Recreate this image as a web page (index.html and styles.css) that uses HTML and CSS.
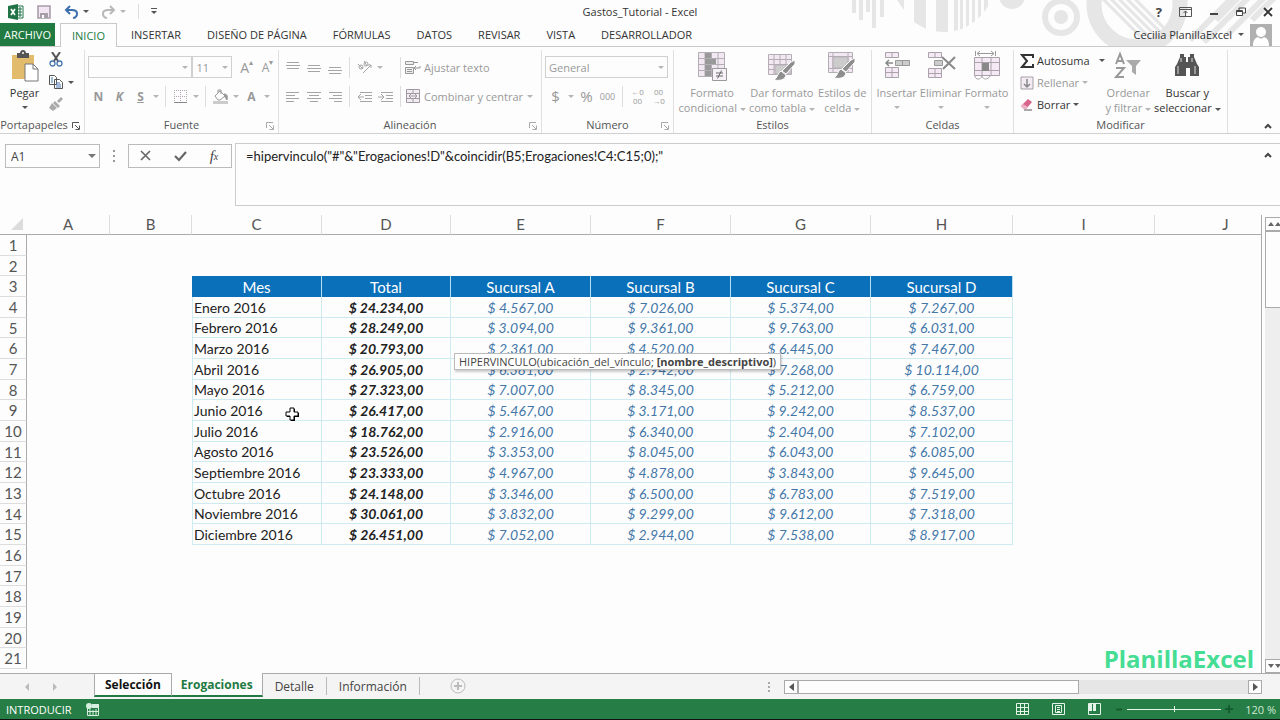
FILE: index.html
```
<!DOCTYPE html>
<html lang="es">
<head>
  <meta charset="utf-8">
  <title>Gastos_Tutorial - Excel</title>
  <link rel="stylesheet" href="styles.css">
</head>
<body>
  <header id="top">
    <svg class="art" width="440" height="46" viewBox="840 0 440 46" fill="#e6e6e6">
      <clipPath id="ball"><circle cx="944" cy="-18" r="50"/></clipPath>
      <clipPath id="ringHole"><circle cx="1137" cy="4" r="36"/></clipPath>
      <path d="M852 0h4v13h-4zM859 0h4v20h-4zM866 0h4v12h-4zM872 0h4v28h-4zM880 0h4v17h-4zM897 0h7v10z"/>
      <path clip-path="url(#ball)" d="M914 0h12v40h-12zM936 0h12v40h-12zM954 0h4v40h-4zM960 0h3v40h-3zM966 0h3v40h-3zM972 0h3v40h-3zM978 0h3v40h-3zM984 0h4v40h-4z"/>
      <circle cx="1012" cy="-4" r="13"/>
      <circle cx="1061" cy="17" r="16" fill="none" stroke="#e6e6e6" stroke-width="6"/>
      <circle cx="1061" cy="17" r="7"/>
      <circle cx="1137" cy="4" r="43" fill="none" stroke="#e6e6e6" stroke-width="15"/>
      <path clip-path="url(#ringHole)" stroke="#e6e6e6" stroke-width="3" d="M1098-6l50 50M1106-6l50 50M1114-6l50 50M1122-6l50 50M1130-6l50 50"/>
      <path stroke="#e6e6e6" stroke-width="6" d="M1190 40l42-42M1204 42l46-46M1216 20l24-24M1228 34l36-36M1252 20l24-24"/>
    </svg>

    <div id="titlebar">
      <div class="quick">
        <svg width="16" height="16" viewBox="0 0 16 16"><path d="M9 2h6v12H9z" fill="#fff" stroke="#217346"/><path d="M10 5h4M10 8h4M10 11h4M12 3v10" stroke="#217346"/><path d="M0 2l10-2v16L0 14z" fill="#217346"/><path d="M3 5l4 6M7 5l-4 6" stroke="#fff" stroke-width="1.6"/></svg>
        <button aria-label="Guardar"><svg width="14" height="14" viewBox="0 0 14 14"><path d="M1 1h12v12H1z" fill="#f3e6f3" stroke="#a79fa8" stroke-width="1.6"/><path d="M3 8h8v5H3z" fill="#a79fa8"/><path d="M5 10h2v3H5z" fill="#fff"/></svg></button>
        <button aria-label="Deshacer"><svg width="15" height="14" viewBox="0 0 15 14" fill="none" stroke="#3b6fae" stroke-width="2"><path d="M6 1L2 5l4 4M2 5h6c7 0 6 7 1 8"/></svg></button>
        <i class="caret dark"></i>
        <button aria-label="Rehacer"><svg width="15" height="14" viewBox="0 0 15 14" fill="none" stroke="#b8b8b8" stroke-width="2"><path d="M9 1l4 4-4 4M13 5H7C0 5 1 12 6 13"/></svg></button>
        <i class="caret"></i>
        <span class="line"></span>
        <button aria-label="Personalizar"><svg width="6" height="7" viewBox="0 0 6 7" fill="#555"><path d="M0 0h6v1H0zM0 3h6L3 6z"/></svg></button>
      </div>
      <div class="doc">Gastos_Tutorial - Excel</div>
      <div class="window">
        <button aria-label="Ayuda"><b>?</b></button>
        <button aria-label="Cinta"><svg width="13" height="10" viewBox="0 0 13 10" fill="none" stroke="#555"><path d="M.5.5h12v9H.5zM.5 2.5h12M6.500 9V4M4.500 6l2-2 2 2"/></svg></button>
        <button aria-label="Minimizar"><svg width="10" height="10" viewBox="0 0 10 10"><path d="M1 6h8v2H1z" fill="#444"/></svg></button>
        <button aria-label="Restaurar"><svg width="10" height="10" viewBox="0 0 10 10" fill="none" stroke="#444"><path d="M.5 3.500h6v5h-6zM3 3V1h6.500v5H7M.5 4.500h6"/></svg></button>
        <button aria-label="Cerrar"><svg width="10" height="10" viewBox="0 0 10 10" stroke="#333" stroke-width="1.800"><path d="M1 1l8 8M9 1L1 9"/></svg></button>
      </div>
    </div>

    <nav id="tabs">
      <button class="file">ARCHIVO</button>
      <button class="active">INICIO</button>
      <button>INSERTAR</button>
      <button>DISEÑO DE PÁGINA</button>
      <button>FÓRMULAS</button>
      <button>DATOS</button>
      <button>REVISAR</button>
      <button>VISTA</button>
      <button>DESARROLLADOR</button>
      <div class="user">
        Cecilia PlanillaExcel <i class="caret dark"></i>
        <svg width="22" height="22" viewBox="0 0 22 22"><path d="M0 0h22v22H0z" fill="#b0b0b0"/><circle cx="11" cy="8" r="5" fill="#fff"/><path d="M3 22c0-6 2-8 5-9 2 2 4 2 6 0 3 1 5 3 5 9z" fill="#fff"/></svg>
      </div>
    </nav>
  </header>

  <div id="ribbon">
    <section class="group clipboard">
      <div class="tools">
        <button class="big on">
          <svg width="28" height="32" viewBox="0 0 28 32"><path d="M1 5h22v24H1z" fill="#e3bb6d"/><path d="M6 3h3c0-4 6-4 6 0h3v5H6z" fill="#555"/><circle cx="12" cy="3" r="1" fill="#fff"/><path d="M14 14h8l5 5v12H14z" fill="#fff" stroke="#777"/><path d="M22 14v5h5" fill="none" stroke="#777"/></svg>
          Pegar<i class="caret dark"></i>
        </button>
        <div class="stack">
          <button aria-label="Cortar"><svg width="14" height="15" viewBox="0 0 14 15" fill="none"><path d="M3 0l6 9M11 0L5 9" stroke="#555" stroke-width="2"/><circle cx="3.500" cy="11.500" r="2.500" stroke="#4676b0" stroke-width="1.300"/><circle cx="10.500" cy="11.500" r="2.500" stroke="#4676b0" stroke-width="1.300"/></svg></button>
          <button aria-label="Copiar"><svg width="14" height="14" viewBox="0 0 14 14" fill="#fff" stroke="#555"><path d="M.5.5h5l2 2v7h-7zM5.500 4.500h5l3 3v6h-8z"/><path d="M2 3h2M2 5h2M2 7h2M7 8h4M7 10h5M7 12h5" stroke="#4676b0"/></svg><i class="caret dark"></i></button>
          <button aria-label="Copiar formato"><svg width="14" height="14" viewBox="0 0 14 14" fill="#aaa"><path d="M12 0l2 2-4 4-2-2zM6 4l5 5-2 2-5-5zM3 6l5 5-4 3-4-3z"/></svg></button>
        </div>
      </div>
      <h2>Portapapeles<svg class="launch on" width="8" height="8" viewBox="0 0 8 8"><path d="M.5 6V.5H7M3 3l4 4M7.500 3.500v4h-4"/></svg></h2>
    </section>

    <section class="group font">
      <div class="rows">
        <div class="row">
          <span class="pick family"><select aria-label="Fuente"><option></option></select></span>
          <span class="pick size"><select aria-label="Tamaño"><option>11</option></select></span>
          <button class="ib grow" aria-label="Aumentar">A<sup>▴</sup></button>
          <button class="ib shrink" aria-label="Disminuir">A<sup>▾</sup></button>
        </div>
        <div class="row">
          <button class="ib"><b>N</b></button>
          <button class="ib"><b><em>K</em></b></button>
          <button class="ib"><b><u>S</u></b></button>
          <button class="drop" aria-label="Subrayado"><i class="caret"></i></button>
          <span class="line"></span>
          <button class="ib" aria-label="Bordes"><svg width="13" height="13" viewBox="0 0 13 13" stroke="#b3a7b3"><path d="M0 .5h13M.5 0v12M12.500 0v12M6.500 0v12M0 6.500h13" stroke-dasharray="1 1"/><path d="M0 12.500h13" stroke="#888"/></svg></button>
          <button class="drop" aria-label="Más bordes"><i class="caret"></i></button>
          <span class="line"></span>
          <button class="ib" aria-label="Relleno"><svg width="16" height="15" viewBox="0 0 16 15" fill="none" stroke="#999"><path d="M2 7l5-5 5 5-5 4H5zM5 4V1h3v4"/><path d="M11 5c3 0 4 2 3 6l-2-3z" fill="#999"/><path d="M0 13.500h15" stroke="#ccc" stroke-width="3"/></svg></button>
          <button class="drop" aria-label="Más rellenos"><i class="caret"></i></button>
          <button class="ib"><b>A</b></button>
          <button class="drop" aria-label="Más colores"><i class="caret"></i></button>
        </div>
      </div>
      <h2>Fuente<svg class="launch" width="8" height="8" viewBox="0 0 8 8"><path d="M.5 6V.5H7M3 3l4 4M7.500 3.500v4h-4"/></svg></h2>
    </section>

    <section class="group align">
      <div class="rows">
        <div class="row">
          <button class="ib" aria-label="Arriba"><svg width="14" height="13" viewBox="0 0 14 13"><path d="M1 1.500h12M0 4.500h14M1 7.500h12"/></svg></button>
          <button class="ib" aria-label="Medio"><svg width="14" height="13" viewBox="0 0 14 13"><path d="M1 4.500h12M0 7.500h14M1 10.500h12"/></svg></button>
          <button class="ib" aria-label="Abajo"><svg width="14" height="13" viewBox="0 0 14 13"><path d="M1 6.500h12M0 9.500h14M1 12.500h12"/></svg></button>
          <span class="line"></span>
          <button class="ib" aria-label="Orientación"><svg width="15" height="14" viewBox="0 0 15 14" fill="none" stroke="#999"><circle cx="4" cy="7" r="2"/><path d="M1 4l5 5M7 1l3 5"/><circle cx="9" cy="4" r="2"/><path d="M6 13l8-8M11 5h3v3"/></svg></button>
          <button class="drop" aria-label="Más orientaciones"><i class="caret"></i></button>
          <span class="blank"></span>
          <span class="line"></span>
          <button class="wide"><svg width="16" height="15" viewBox="0 0 16 15" fill="#eee" stroke="#999"><path d="M.5 1.500h8v3h-8zM8 2.500h5M.5 7.500h8v6h-8zM2 9.500h5M2 11.500h5M15 6v2h-5M11 6L9 8l2 2"/></svg>Ajustar texto</button>
        </div>
        <div class="row">
          <button class="ib" aria-label="Izquierda"><svg width="14" height="11" viewBox="0 0 14 11"><path d="M0 1.500h13M0 4.500h9M0 7.500h13M0 10.500h8"/></svg></button>
          <button class="ib" aria-label="Centro"><svg width="14" height="11" viewBox="0 0 14 11"><path d="M0 1.500h14M2 4.500h10M0 7.500h14M3 10.500h8"/></svg></button>
          <button class="ib" aria-label="Derecha"><svg width="14" height="11" viewBox="0 0 14 11"><path d="M1 1.500h13M5 4.500h9M1 7.500h13M6 10.500h8"/></svg></button>
          <span class="line"></span>
          <button class="ib" aria-label="Disminuir sangría"><svg width="15" height="11" viewBox="0 0 15 11" fill="none"><path d="M3 1.500h12M8 4.500h7M8 7.500h7M3 10.500h12M7 6H1M4 3L1 6l3 3"/></svg></button>
          <button class="ib" aria-label="Aumentar sangría"><svg width="15" height="11" viewBox="0 0 15 11" fill="none"><path d="M3 1.500h12M8 4.500h7M8 7.500h7M3 10.500h12M0 6h6M3 3l3 3-3 3"/></svg></button>
          <span class="line"></span>
          <button class="wide"><svg width="16" height="15" viewBox="0 0 16 15" fill="#f3ecf3" stroke="#a09aa0"><path d="M1.500.5h13v13h-13zM1.500 4.500h13M1.500 9.500h13M8 0v4M8 10v4M4 7h8M6 5L4 7l2 2M10 5l2 2-2 2"/></svg>Combinar y centrar</button>
          <button class="drop end" aria-label="Más"><i class="caret"></i></button>
        </div>
      </div>
      <h2>Alineación<svg class="launch" width="8" height="8" viewBox="0 0 8 8"><path d="M.5 6V.5H7M3 3l4 4M7.500 3.500v4h-4"/></svg></h2>
    </section>

    <section class="group number">
      <div class="rows">
        <div class="row">
          <span class="pick format"><select aria-label="Formato de número"><option>General</option></select></span>
        </div>
        <div class="row">
          <button class="ib sign">$</button>
          <button class="drop" aria-label="Monedas"><i class="caret"></i></button>
          <button class="ib sign">%</button>
          <button class="ib zeros">000</button>
          <span class="line"></span>
          <button class="ib dec">←0<br>00</button>
          <button class="ib dec">00<br>→0</button>
        </div>
      </div>
      <h2>Número<svg class="launch" width="8" height="8" viewBox="0 0 8 8"><path d="M.5 6V.5H7M3 3l4 4M7.500 3.500v4h-4"/></svg></h2>
    </section>

    <section class="group styles">
      <div class="tools">
        <button class="big">
          <svg width="30" height="32" viewBox="0 0 30 32" fill="#f1e8f1" stroke="#b5adb5"><path d="M1.500 2.500h26v24h-26zM1 8.500h26M1 14.500h26M1 20.500h26M8 3v23M14.500 3v23M21 3v23"/><path d="M8 3h6v5H8zM8 9h11v5H8zM8 15h6v5H8zM8 21h6v5H8z" fill="#999" stroke="none"/><path d="M15.500 18.500h14v12h-14z" fill="#f7f2f7" stroke="#999"/><path d="M19 23h7M19 26h7M24.500 20.500l-4 8" stroke="#666"/></svg>
          <span>Formato<br>condicional <i class="caret"></i></span>
        </button>
        <button class="big">
          <svg width="30" height="32" viewBox="0 0 30 32" fill="#f1e8f1" stroke="#b5adb5"><path d="M1.500 4.500h23v20h-23zM1 9.500h23M1 14.500h23M1 19.500h23M7 4v20M13 4v20M19 4v20"/><path d="M8 15h16v9H8z" fill="#ccc"/><path d="M28 10v4l-9 10-4-3 9-9z" fill="#8e8e8e" stroke="#fff"/><path d="M14 21l5 4c-1 5-6 6-12 5 4-2 3-7 7-9z" fill="#8e8e8e" stroke="#fff"/></svg>
          <span>Dar formato<br>como tabla <i class="caret"></i></span>
        </button>
        <button class="big">
          <svg width="30" height="32" viewBox="0 0 30 32" fill="#f1e8f1" stroke="#b5adb5"><path d="M1.500 2.500h24v20h-24zM1 6.500h24M1 18.500h24M6 3v19M21 3v19"/><path d="M6 7h15v11H6z" fill="#ccc"/><path d="M28 8v4l-9 10-4-3 9-9z" fill="#8e8e8e" stroke="#fff"/><path d="M14 19l5 4c-1 5-6 6-12 5 4-2 3-7 7-9z" fill="#8e8e8e" stroke="#fff"/></svg>
          <span>Estilos de<br>celda <i class="caret"></i></span>
        </button>
      </div>
      <h2>Estilos</h2>
    </section>

    <section class="group cells">
      <div class="tools">
        <button class="big">
          <svg width="28" height="32" viewBox="0 0 28 32" fill="#f5e9f5" stroke="#aaa2aa"><path d="M2.500 2.500h13v5h-13zM9 3v5M2.500 17.500h13v10h-13zM9 18v10M3 22.500h12"/><path d="M12.500 10.500h14v5h-14zM19.500 11v5" fill="#ccc" stroke="#999"/><path d="M10 13H4M6 10l-3 3 3 3" fill="none" stroke="#888" stroke-width="1.500"/></svg>
          Insertar<i class="caret"></i>
        </button>
        <button class="big">
          <svg width="30" height="32" viewBox="0 0 30 32" fill="#f5e9f5" stroke="#aaa2aa"><path d="M2.500 2.500h13v5h-13zM9 3v5M2.500 18.500h13v9h-13zM9 19v9M3 23.500h12"/><path d="M8.500 10.500h8v5h-8z" fill="#ccc" stroke="#999"/><path d="M16 7l13 12M29 7L17 19" stroke="#888" stroke-width="2"/></svg>
          Eliminar<i class="caret"></i>
        </button>
        <button class="big">
          <svg width="28" height="32" viewBox="0 0 28 32" fill="#f5e9f5" stroke="#aaa2aa"><path d="M1.500 7.500h25v18h-25zM1 12.500h25M1 20.500h25M9 8v17M18 8v17"/><path d="M9 13h7v8H9z" fill="#888" stroke="none"/><path d="M2.500 1v5M22.500 1v5M4 3.500h17M7 1L4 3.500 7 6M18 1l3 2.500L18 6" fill="none" stroke="#999"/><path d="M2 26c0 4 6 4 7 0 1 4 6 4 8 0" fill="#fff"/></svg>
          Formato<i class="caret"></i>
        </button>
      </div>
      <h2>Celdas</h2>
    </section>

    <section class="group edit">
      <div class="tools">
        <div class="list">
          <button class="on"><svg width="14" height="14" viewBox="0 0 14 14" fill="none" stroke="#333" stroke-width="2"><path d="M13 4V1H2l5 6-5 6h11v-3"/></svg>Autosuma <i class="caret dark far"></i></button>
          <button><svg width="14" height="14" viewBox="0 0 14 14" fill="#f3ecf3" stroke="#a79fa8"><path d="M1 1h12v12H1z"/><path d="M7 3v7M4 8l3 3 3-3" fill="none" stroke="#888" stroke-width="1.500"/></svg>Rellenar <i class="caret"></i></button>
          <button class="on"><svg width="14" height="14" viewBox="0 0 14 14"><path d="M8 1l4 3-6 7H4L1 8z" fill="#d9658b"/><path d="M3 6l5 3-2 2H4L1 8z" fill="#eeb0c4"/><path d="M4 12h8" stroke="#555"/></svg>Borrar <i class="caret dark"></i></button>
        </div>
        <button class="big">
          <svg width="28" height="32" viewBox="0 0 28 32" fill="none" stroke="#999" stroke-width="2"><path d="M2 14L6 4l4 10M3 11h6M2 18h8L2 27h8"/><path d="M12 10h15l-5 6v9l-4-3v-6z" fill="#aaa" stroke="none"/></svg>
          <span>Ordenar<br>y filtrar <i class="caret"></i></span>
        </button>
        <button class="big on">
          <svg width="26" height="32" viewBox="0 0 26 32" fill="#555"><path d="M6 4h4v3h2v5h2V7h2V4h4v3l3 7 2 3v9h-9v-8h-4v8H1v-9l2-3 3-7z"/><path d="M4 16v8M21 16v8M7 8v4M18 8v4" stroke="#ddd"/></svg>
          <span>Buscar y<br>seleccionar <i class="caret dark"></i></span>
        </button>
      </div>
      <h2>Modificar</h2>
    </section>
    <button class="collapse" aria-label="Contraer la cinta"><svg width="8" height="6" viewBox="0 0 8 6" fill="none" stroke="#444" stroke-width="2"><path d="M1 5l3-3 3 3"/></svg></button>
  </div>

  <div id="formulabar">
    <span class="pick name"><input value="A1" aria-label="Cuadro de nombres"></span>
    <svg class="grip" width="4" height="14" viewBox="0 0 4 14" fill="#999"><path d="M1 1h2v2H1zM1 6h2v2H1zM1 11h2v2H1z"/></svg>
    <div class="checks">
      <button aria-label="Cancelar"><svg width="12" height="12" viewBox="0 0 12 12" stroke="#666" stroke-width="1.600"><path d="M1 1l9 9M10 1l-9 9"/></svg></button>
      <button aria-label="Introducir"><svg width="13" height="12" viewBox="0 0 13 12" fill="none" stroke="#666" stroke-width="2.200"><path d="M1 6l4 4 7-8"/></svg></button>
      <button class="fx">f<sub>x</sub></button>
    </div>
    <textarea aria-label="Barra de fórmulas" spellcheck="false">=hipervinculo("#"&amp;"Erogaciones!D"&amp;coincidir(B5;Erogaciones!C4:C15;0);"</textarea>
    <button class="collapse" aria-label="Contraer la barra"><svg width="8" height="6" viewBox="0 0 8 6" fill="none" stroke="#444" stroke-width="2"><path d="M1 5l3-3 3 3"/></svg></button>
  </div>

  <main id="sheet">
    <div class="view">
      <table>
        <colgroup><col class="c-head"><col class="c-a"><col class="c-b"><col class="c-c"><col class="c-d"><col class="c-e"><col class="c-e"><col class="c-e"><col class="c-h"><col class="c-h"><col class="c-h"></colgroup>
        <thead>
          <tr><th><svg width="12" height="12" viewBox="0 0 12 12"><path d="M12 0v12H0z" fill="#dcdcdc"/></svg></th><th>A</th><th>B</th><th>C</th><th>D</th><th>E</th><th>F</th><th>G</th><th>H</th><th>I</th><th>J</th></tr>
        </thead>
        <tbody>
          <tr><th>1</th><td colspan="10"></td></tr>
          <tr><th>2</th><td colspan="10"></td></tr>
          <tr class="names"><th>3</th><td colspan="2"></td><td>Mes</td><td>Total</td><td>Sucursal A</td><td>Sucursal B</td><td>Sucursal C</td><td>Sucursal D</td></tr>
          <tr class="data"><th>4</th><td colspan="2"></td><td>Enero 2016</td><td>$ 24.234,00</td><td>$ 4.567,00</td><td>$ 7.026,00</td><td>$ 5.374,00</td><td>$ 7.267,00</td></tr>
          <tr class="data"><th>5</th><td colspan="2"></td><td>Febrero 2016</td><td>$ 28.249,00</td><td>$ 3.094,00</td><td>$ 9.361,00</td><td>$ 9.763,00</td><td>$ 6.031,00</td></tr>
          <tr class="data"><th>6</th><td colspan="2"></td><td>Marzo 2016</td><td>$ 20.793,00</td><td>$ 2.361,00</td><td>$ 4.520,00</td><td>$ 6.445,00</td><td>$ 7.467,00</td></tr>
          <tr class="data"><th>7</th><td colspan="2"></td><td>Abril 2016</td><td>$ 26.905,00</td><td>$ 6.381,00</td><td>$ 2.942,00</td><td>$ 7.268,00</td><td>$ 10.114,00</td></tr>
          <tr class="data"><th>8</th><td colspan="2"></td><td>Mayo 2016</td><td>$ 27.323,00</td><td>$ 7.007,00</td><td>$ 8.345,00</td><td>$ 5.212,00</td><td>$ 6.759,00</td></tr>
          <tr class="data"><th>9</th><td colspan="2"></td><td>Junio 2016</td><td>$ 26.417,00</td><td>$ 5.467,00</td><td>$ 3.171,00</td><td>$ 9.242,00</td><td>$ 8.537,00</td></tr>
          <tr class="data"><th>10</th><td colspan="2"></td><td>Julio 2016</td><td>$ 18.762,00</td><td>$ 2.916,00</td><td>$ 6.340,00</td><td>$ 2.404,00</td><td>$ 7.102,00</td></tr>
          <tr class="data"><th>11</th><td colspan="2"></td><td>Agosto 2016</td><td>$ 23.526,00</td><td>$ 3.353,00</td><td>$ 8.045,00</td><td>$ 6.043,00</td><td>$ 6.085,00</td></tr>
          <tr class="data"><th>12</th><td colspan="2"></td><td>Septiembre 2016</td><td>$ 23.333,00</td><td>$ 4.967,00</td><td>$ 4.878,00</td><td>$ 3.843,00</td><td>$ 9.645,00</td></tr>
          <tr class="data"><th>13</th><td colspan="2"></td><td>Octubre 2016</td><td>$ 24.148,00</td><td>$ 3.346,00</td><td>$ 6.500,00</td><td>$ 6.783,00</td><td>$ 7.519,00</td></tr>
          <tr class="data"><th>14</th><td colspan="2"></td><td>Noviembre 2016</td><td>$ 30.061,00</td><td>$ 3.832,00</td><td>$ 9.299,00</td><td>$ 9.612,00</td><td>$ 7.318,00</td></tr>
          <tr class="data"><th>15</th><td colspan="2"></td><td>Diciembre 2016</td><td>$ 26.451,00</td><td>$ 7.052,00</td><td>$ 2.944,00</td><td>$ 7.538,00</td><td>$ 8.917,00</td></tr>
          <tr><th>16</th><td colspan="10"></td></tr>
          <tr><th>17</th><td colspan="10"></td></tr>
          <tr><th>18</th><td colspan="10"></td></tr>
          <tr><th>19</th><td colspan="10"></td></tr>
          <tr><th>20</th><td colspan="10"></td></tr>
          <tr><th>21</th><td colspan="10"></td></tr>
        </tbody>
      </table>
      <div class="tip">HIPERVINCULO(ubicación_del_vínculo; <b>[nombre_descriptivo]</b>)</div>
      <svg class="cursor" width="15" height="15" viewBox="0 0 15 15"><path d="M5 1h4v4h4v4H9v4H5V9H1V5h4z" transform="translate(1 1)" fill="#000"/><path d="M5 1h4v4h4v4H9v4H5V9H1V5h4z" fill="#fff" stroke="#000"/></svg>
    </div>
    <div class="vbar">
      <button aria-label="Subir"><svg width="14" height="6" viewBox="0 0 14 6" fill="#666"><path d="M0 5l3-4 3 4zM7 5l3-4 3 4z"/></svg></button>
      <div class="thumb"></div>
      <button aria-label="Bajar"><svg width="14" height="6" viewBox="0 0 14 6" fill="#666"><path d="M0 1h6L3 5zM7 1h6l-3 4z"/></svg></button>
    </div>
    <div class="brand">PlanillaExcel</div>
  </main>

  <div id="sheets">
    <div class="arrows">
      <svg width="5" height="8" viewBox="0 0 5 8"><path d="M4 0v8L0 4z" fill="#bbb"/></svg>
      <svg width="5" height="8" viewBox="0 0 5 8"><path d="M1 0v8l4-4z" fill="#bbb"/></svg>
    </div>
    <button class="picked">Selección</button>
    <button class="picked current">Erogaciones</button>
    <button>Detalle</button>
    <button>Información</button>
    <button class="add" aria-label="Hoja nueva"><svg width="16" height="16" viewBox="0 0 16 16" fill="none" stroke="#bbb"><circle cx="8" cy="8" r="7"/><path d="M4 8h8M8 4v8" stroke-width="2"/></svg></button>
    <svg class="grip" width="4" height="14" viewBox="0 0 4 14" fill="#aaa"><path d="M1 2h2v2H1zM1 6h2v2H1zM1 10h2v2H1z"/></svg>
    <div class="hbar">
      <button aria-label="Izquierda"><svg width="5" height="8" viewBox="0 0 5 8"><path d="M5 0v8L0 4z" fill="#555"/></svg></button>
      <div class="thumb"></div>
      <button aria-label="Derecha"><svg width="5" height="8" viewBox="0 0 5 8"><path d="M0 0v8l5-4z" fill="#555"/></svg></button>
    </div>
  </div>

  <footer id="status">
    <span>INTRODUCIR</span>
    <svg width="13" height="13" viewBox="0 0 13 13" fill="none" stroke="#d6f0df"><path d="M1.500 4v8.500h11v-11H6M4 6v6M7 7v5M10 6v6M1 8.500h11M6 4.500h6"/><path d="M6 1h7v3H6z" fill="#d6f0df" stroke="none"/><circle cx="3" cy="3" r="3" fill="#d6f0df" stroke="none"/></svg>
    <div class="views">
      <button aria-label="Normal"><svg width="13" height="12" viewBox="0 0 13 12" fill="none" stroke="#e6f5ea"><path d="M.5.5h12v11H.5zM4.500 0v12M8.500 0v12M0 4.500h13M0 8.500h13"/></svg></button>
      <button aria-label="Diseño de página"><svg width="13" height="12" viewBox="0 0 13 12" fill="none" stroke="#e6f5ea"><path d="M.5.5h12v11H.5zM3.500 2.500h6v7h-6zM5 4.500h3M5 6.500h3M5 8.500h3"/></svg></button>
      <button aria-label="Salto de página"><svg width="13" height="12" viewBox="0 0 13 12" fill="none" stroke="#e6f5ea"><path d="M.5.5h12v11H.5z"/><path d="M1 1h3v7H1zM5 1h3v7H5z" fill="#e6f5ea" stroke="none"/></svg></button>
    </div>
    <div class="zoom">
      <button aria-label="Alejar"><svg width="7" height="7" viewBox="0 0 7 7"><path d="M0 3.500h6" stroke="#145c2f" stroke-width="2"/></svg></button>
      <input type="range" min="0" max="100" value="50" aria-label="Zoom">
      <button aria-label="Acercar"><svg width="8" height="8" viewBox="0 0 8 8"><path d="M0 4h8M4 0v8" stroke="#145c2f" stroke-width="2"/></svg></button>
      <span>120 %</span>
    </div>
  </footer>
</body>
</html>
```
FILE: styles.css
```
* {
  box-sizing: border-box;
}
body {
  margin: 0;
  height: 100vh;
  display: flex;
  flex-direction: column;
  overflow: hidden;
  background: #fdfdfd;
  color: #444;
  font-family: "Open Sans", "Noto Sans", sans-serif;
  font-size: 11px;
}
button, input, select, textarea {
  margin: 0;
  padding: 0;
  border: none;
  background: none;
  color: inherit;
  font: inherit;
}
button {
  display: flex;
  align-items: center;
  justify-content: center;
  white-space: nowrap;
}
svg {
  flex: none;
  display: block;
}
.caret {
  display: inline-block;
  flex: none;
  border: 3px solid transparent;
  border-top-color: #b5b5b5;
  border-bottom: none;
  vertical-align: middle;
}
.caret.dark {
  border-top-color: #555;
}
.line {
  width: 1px;
  height: 21px;
  margin: 0 4px;
  background: #ddd;
}

/* title and tabs */
#top {
  position: relative;
  flex: none;
  height: 47px;
  border-bottom: 1px solid #c9c9c9;
}
.art {
  position: absolute;
  right: 0;
  top: 0;
  z-index: -1;
}
#titlebar {
  display: grid;
  grid-template-columns: 1fr auto 1fr;
  align-items: center;
  height: 23px;
}
.quick {
  display: flex;
  align-items: center;
  padding-left: 8px;
}
.quick button:nth-of-type(1) {
  margin: 0 13px;
}
.quick .caret {
  margin: 0 12px 0 4px;
}
.quick .line {
  height: 15px;
  margin: 0 12px 0 0;
}
.doc {
  color: #333;
}
.window {
  display: flex;
  justify-content: flex-end;
  gap: 17px;
  padding-right: 7px;
}
.window b {
  font-size: 13px;
}
#tabs {
  display: flex;
  height: 23px;
  color: #333;
}
#tabs button {
  padding: 0 13px;
  font-size: 11px;
}
#tabs .file {
  width: 55px;
  padding: 0;
  background: #217a41;
  color: #fff;
}
#tabs .active {
  width: 57px;
  height: 24px;
  margin: 0 1px 0 5px;
  padding: 0;
  border: 1px solid #c9c9c9;
  border-bottom: none;
  background: #fdfdfd;
  color: #217a41;
}
.user {
  display: flex;
  align-items: center;
  gap: 6px;
  margin-left: auto;
  padding-right: 8px;
}

/* ribbon */
#ribbon {
  flex: none;
  display: flex;
  height: 87px;
  padding-top: 3px;
  border-bottom: 1px solid #d0d0d0;
  color: #999;
}
.group {
  display: flex;
  flex-direction: column;
  height: 83px;
  border-right: 1px solid #e0e0e0;
}
.clipboard { width: 85px; }
.font { width: 194px; }
.align { width: 263px; }
.number { width: 132px; }
.styles { width: 198px; }
.cells { width: 142px; }
.edit { width: 214px; }
.group h2 {
  position: relative;
  margin: 0;
  height: 16px;
  line-height: 16px;
  font-size: 11px;
  font-weight: normal;
  text-align: center;
  color: #555;
}
.clipboard h2 {
  padding-right: 16px;
}
.launch {
  position: absolute;
  right: 4px;
  bottom: 3px;
  fill: none;
  stroke: #aaa;
}
.launch.on {
  stroke: #555;
}
.tools {
  display: flex;
  flex: 1;
}
.on {
  color: #333;
}
.big {
  flex-direction: column;
  justify-content: flex-start;
  flex: auto;
  line-height: 15px;
}
.big svg {
  margin-bottom: 3px;
}
.big > .caret {
  margin-top: 6px;
}
.clipboard .big {
  flex: none;
  width: 49px;
}
.stack {
  display: flex;
  flex-direction: column;
  gap: 8px;
  padding-top: 2px;
}
.stack button {
  justify-content: flex-start;
  gap: 5px;
}
.rows {
  flex: 1;
  display: flex;
  flex-direction: column;
  gap: 7px;
  padding: 6px 0 0 3px;
}
.row {
  display: flex;
  align-items: center;
  height: 22px;
}
.ib {
  width: 21px;
  height: 21px;
  font-size: 12px;
}
.align .ib svg {
  stroke: #a5a5a5;
}
.drop {
  width: 10px;
  height: 21px;
}
.blank {
  width: 11px;
}
.end {
  margin-left: auto;
  margin-right: 6px;
}
.wide {
  gap: 3px;
}
.grow, .shrink {
  font-size: 14px;
}
.grow {
  margin-left: 4px;
}
.shrink {
  font-size: 12px;
}
.ib sup {
  align-self: flex-start;
  font-size: 8px;
  line-height: 10px;
}
.sign {
  font-size: 15px;
}
.zeros {
  font-size: 9px;
}
.dec {
  font-size: 8px;
  line-height: 9px;
}
.pick {
  position: relative;
  height: 22px;
  border: 1px solid #d0d0d0;
}
.pick select, .pick input {
  display: block;
  width: 100%;
  height: 100%;
  padding-left: 3px;
  appearance: none;
  opacity: 1;
}
.pick::after {
  content: "";
  position: absolute;
  right: 3px;
  top: 9px;
  border: 3px solid transparent;
  border-top-color: #b5b5b5;
  border-bottom: none;
}
.family { width: 105px; }
.size { width: 40px; }
.format { width: 123px; }
.styles .tools, .cells .tools {
  padding: 0 3px;
}
.list {
  display: flex;
  flex-direction: column;
  gap: 7px;
  width: 90px;
  padding: 3px 0 0 6px;
}
.list button {
  gap: 3px;
  justify-content: flex-start;
  height: 15px;
}
.far {
  margin-left: 6px;
}
.edit .on.big {
  margin-right: 5px;
}
.collapse {
  align-self: flex-end;
  margin: 0 8px 4px auto;
}

/* formula bar */
#formulabar {
  flex: none;
  display: flex;
  align-items: flex-start;
  height: 81px;
  padding: 9px 0 0 5px;
}
.name {
  width: 95px;
  height: 24px;
  margin-top: 1px;
  border-color: #bbb;
}
.name input {
  padding-left: 5px;
  font-size: 12px;
}
.name::after {
  border-width: 4px;
  border-bottom: none;
  border-top-color: #777;
}
#formulabar .grip {
  margin: 6px 12px 0;
}
.checks {
  display: flex;
  width: 104px;
  height: 24px;
  margin: 1px 3px 0 0;
  border: 1px solid #bbb;
}
.checks button {
  flex: 1;
}
.checks .fx {
  font-family: "Liberation Serif", serif;
  font-size: 15px;
  font-style: italic;
}
.fx sub {
  font-size: 10px;
}
#formulabar textarea {
  flex: 1;
  height: 63px;
  padding: 3px 10px;
  border: 1px solid #ccc;
  border-right: none;
  resize: none;
  outline: none;
  color: #222;
  font-family: Lato, sans-serif;
  font-size: 13px;
  line-height: 18px;
}
#formulabar .collapse {
  position: absolute;
  right: 0;
  margin: 9px 8px 0 0;
  align-self: flex-start;
}

/* cells */
#sheet {
  position: relative;
  flex: 1;
  display: flex;
  min-height: 0;
}
.view {
  position: relative;
  flex: 1;
  overflow: hidden;
  border-right: 1px solid #aaa;
}
table {
  width: 1297px;
  table-layout: fixed;
  border-collapse: separate;
  border-spacing: 0;
  font-family: Lato, sans-serif;
  font-size: 14px;
}
.c-head { width: 27px; }
.c-a { width: 83px; }
.c-b { width: 82px; }
.c-c { width: 130px; }
.c-d { width: 129px; }
.c-e { width: 140px; }
.c-h { width: 142px; }
th, td {
  padding: 0;
  line-height: 18px;
  font-weight: normal;
}
thead th {
  height: 20px;
  border-right: 1px solid #ddd;
  border-bottom: 1px solid #aaa;
  padding-bottom: 1px;
  font-size: 15px;
  color: #555;
}
thead th:first-child {
  border-right: none;
}
thead svg {
  margin-left: 11px;
}
tbody tr {
  height: 21px;
}
tbody tr:nth-child(3n+2) {
  height: 20px;
}
tbody th {
  border-right: 1px solid #aaa;
  border-bottom: 1px solid #ddd;
  font-size: 15px;
  color: #555;
}
.names td, .data td {
  text-align: center;
}
.names td:nth-child(n+3) {
  border-right: 1px solid #b8def0;
  background: #0b70ba;
  color: #fff;
  font-size: 15px;
}
.data td:nth-child(n+3) {
  padding-top: 1px;
  border-right: 1px solid #cdebf1;
  border-bottom: 1px solid #cdebf1;
  color: #4377a8;
  font-style: italic;
}
.data td:nth-child(3) {
  padding-left: 1px;
  border-left: 1px solid #cdebf1;
  text-align: left;
  font-style: normal;
  color: #222;
}
.data td:nth-child(4) {
  font-weight: bold;
  color: #222;
}
.tip {
  position: absolute;
  left: 454px;
  top: 138px;
  height: 17px;
  padding: 0 4px;
  border: 1px solid #bbb;
  background: #fff;
  box-shadow: 1px 2px 2px rgba(0,0,0,0.2);
  line-height: 15px;
  white-space: nowrap;
}
.cursor {
  position: absolute;
  left: 285px;
  top: 192px;
}
.brand {
  position: absolute;
  right: 26px;
  bottom: 0;
  color: #45dd93;
  font-size: 24px;
  line-height: 28px;
  font-weight: bold;
}
.vbar {
  display: flex;
  flex-direction: column;
  width: 15px;
  margin: 2px 0 0 3px;
  overflow: hidden;
  background: #eee;
}
.vbar button {
  flex: none;
  justify-content: flex-start;
  height: 14px;
  padding-left: 2px;
  border: 1px solid #aaa;
  border-right: none;
  background: #fdfdfd;
}
.vbar .thumb {
  height: 77px;
  margin-bottom: auto;
  border: 1px solid #aaa;
  border-right: none;
  background: #fdfdfd;
}

/* sheet tabs */
#sheets {
  flex: none;
  display: flex;
  height: 26px;
  border-top: 1px solid #aaa;
  background: #f4f4f4;
  font-size: 12px;
}
.arrows {
  display: flex;
  align-items: center;
  gap: 22px;
  width: 94px;
  padding-left: 25px;
}
#sheets > button {
  height: 18px;
  margin-top: 3px;
  padding: 0 12px;
  border-right: 1px solid #bbb;
}
#sheets .picked {
  height: 23px;
  margin-top: 0;
  padding: 0 10px;
  border-left: 1px solid #aaa;
  border-right: none;
  border-bottom: 2px solid #217a41;
  background: #fdfdfd;
  color: #111;
  font-weight: bold;
}
#sheets .current {
  height: 24px;
  margin-top: -1px;
  padding: 1px 9px 0;
  border-right: 1px solid #aaa;
  color: #217a41;
}
#sheets .add {
  margin-left: 18px;
  border: none;
}
#sheets .grip {
  margin: 6px 13px 0 auto;
}
.hbar {
  display: flex;
  width: 478px;
  height: 14px;
  margin: 6px 18px 0 0;
  background: #e6e6e6;
}
.hbar button, .hbar .thumb {
  width: 14px;
  border: 1px solid #aaa;
  background: #fdfdfd;
}
.hbar .thumb {
  width: 281px;
  margin-right: auto;
}

/* status bar */
#status {
  flex: none;
  display: flex;
  align-items: center;
  height: 21px;
  padding-left: 6px;
  border-bottom: 1px solid #111;
  background: #267d45;
  color: #fff;
}
#status > svg {
  margin-left: 14px;
}
.views {
  display: flex;
  gap: 23px;
  margin-left: auto;
}
.zoom {
  display: flex;
  align-items: center;
  gap: 4px;
  margin-left: 15px;
  padding-right: 4px;
}
.zoom span {
  margin-left: 8px;
  color: #cfe8d6;
}
.zoom input {
  width: 94px;
  height: 10px;
  appearance: none;
  background: linear-gradient(#e6f5ea, #e6f5ea) center / 100% 1px no-repeat;
}
.zoom input::-webkit-slider-thumb {
  appearance: none;
  width: 1px;
  height: 6px;
  background: #e6f5ea;
}
```
